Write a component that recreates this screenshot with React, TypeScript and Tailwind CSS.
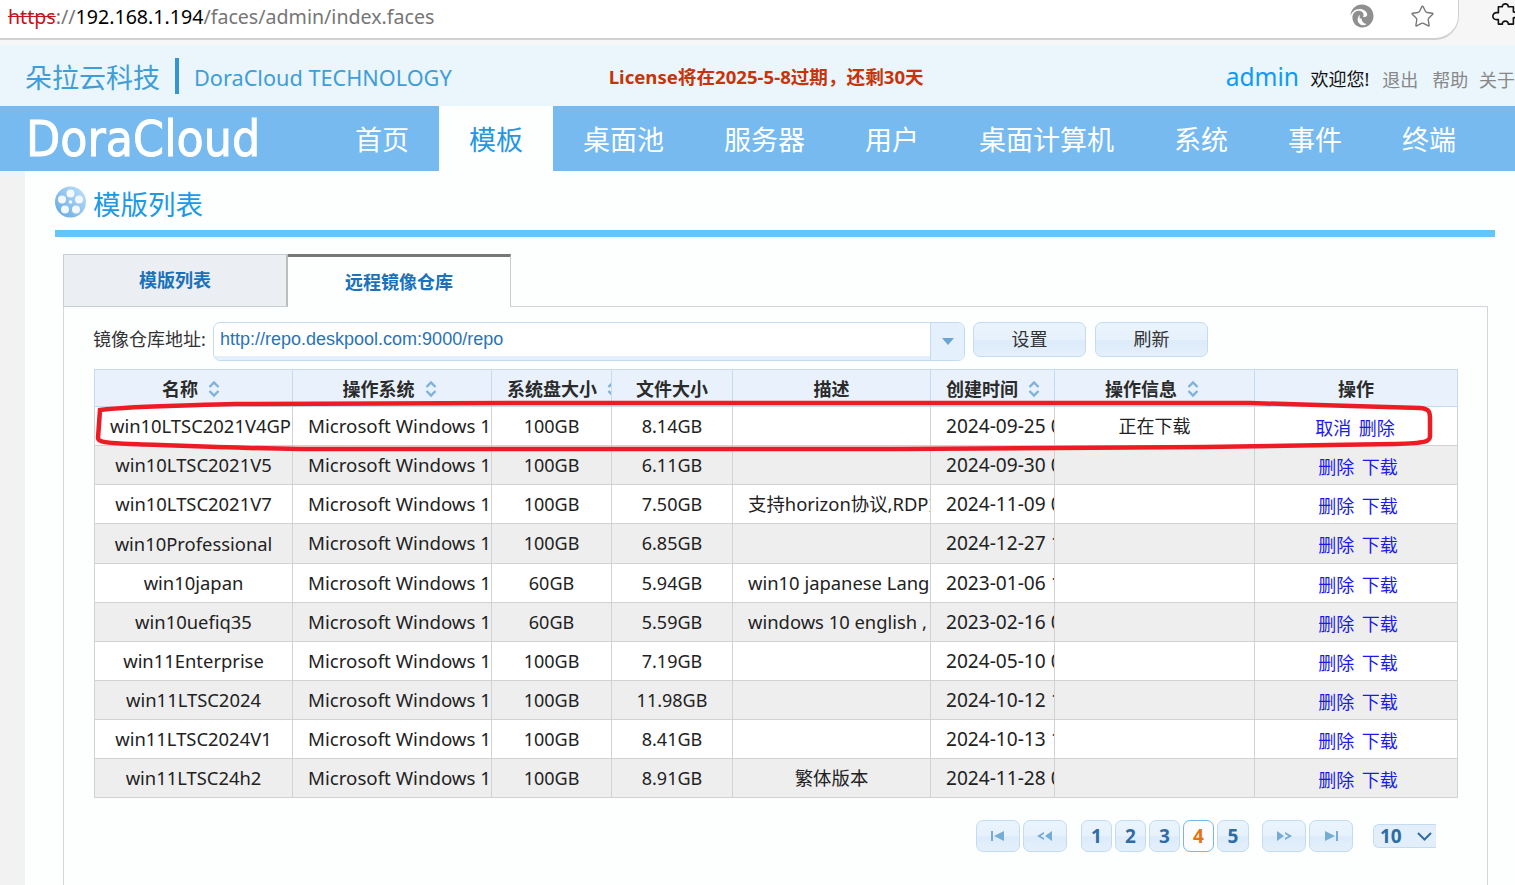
import { Star } from "lucide-react"

const font = { fontFamily: '"Noto Sans", "Noto Sans CJK SC", sans-serif' }

const navItems = ["首页", "模板", "桌面池", "服务器", "用户", "桌面计算机", "系统", "事件", "终端"]

const columns = [
  { label: "名称", sort: true },
  { label: "操作系统", sort: true },
  { label: "系统盘大小", sort: true },
  { label: "文件大小", sort: false },
  { label: "描述", sort: false },
  { label: "创建时间", sort: true },
  { label: "操作信息", sort: true },
  { label: "操作", sort: false },
]

const rows = [
  { name: "win10LTSC2021V4GPU", disk: "100GB", size: "8.14GB", desc: "", time: "2024-09-25 09:21:36", info: "正在下载", h: "h-[39px]" },
  { name: "win10LTSC2021V5", disk: "100GB", size: "6.11GB", desc: "", time: "2024-09-30 09:11:05", info: "", h: "h-[39px]" },
  { name: "win10LTSC2021V7", disk: "100GB", size: "7.50GB", desc: "支持horizon协议,RDP方式", time: "2024-11-09 08:40:17", info: "", h: "h-[39px]" },
  { name: "win10Professional", disk: "100GB", size: "6.85GB", desc: "", time: "2024-12-27 10:02:44", info: "", h: "h-[40px]" },
  { name: "win10japan", disk: "60GB", size: "5.94GB", desc: "win10 japanese Language", time: "2023-01-06 11:32:50", info: "", h: "h-[39px]" },
  { name: "win10uefiq35", disk: "60GB", size: "5.59GB", desc: "windows 10 english , uefi", time: "2023-02-16 09:15:28", info: "", h: "h-[39px]" },
  { name: "win11Enterprise", disk: "100GB", size: "7.19GB", desc: "", time: "2024-05-10 09:48:12", info: "", h: "h-[39px]" },
  { name: "win11LTSC2024", disk: "100GB", size: "11.98GB", desc: "", time: "2024-10-12 13:20:01", info: "", h: "h-[39px]" },
  { name: "win11LTSC2024V1", disk: "100GB", size: "8.41GB", desc: "", time: "2024-10-13 14:05:39", info: "", h: "h-[39px]" },
  { name: "win11LTSC24h2", disk: "100GB", size: "8.91GB", desc: "繁体版本", time: "2024-11-28 09:33:22", info: "", h: "h-[39px]" },
]

const SortIcon = () => (
  <svg width="12" height="18" viewBox="0 0 12 18" className="mr-[5px] ml-[10px] shrink-0" fill="none" stroke="#7fb2da" strokeWidth="2.4">
    <path d="M1.5 7 6 2.5 10.5 7" />
    <path d="M1.5 11 6 15.5 10.5 11" />
  </svg>
)

const ReelIcon = () => (
  <svg width="33" height="32" viewBox="0 0 33 32" className="-mt-[6px] -ml-[1px]">
    <defs>
      <linearGradient id="reel" x1="0" y1="1" x2="1" y2="0">
        <stop offset="0" stopColor="#5ea6e0" />
        <stop offset="1" stopColor="#c4e3fa" />
      </linearGradient>
    </defs>
    <circle cx="16.5" cy="16" r="15.5" fill="url(#reel)" />
    <circle cx="16.5" cy="7.5" r="4" fill="#f2f8fd" />
    <circle cx="8" cy="13.5" r="4" fill="#f2f8fd" />
    <circle cx="25" cy="13.5" r="4" fill="#f2f8fd" />
    <circle cx="11" cy="23.5" r="4" fill="#f2f8fd" />
    <circle cx="22" cy="23.5" r="4" fill="#f2f8fd" />
    <circle cx="16.5" cy="16" r="1.8" fill="#f2f8fd" />
  </svg>
)

const EdgeIcon = () => (
  <svg width="24" height="24" viewBox="0 0 24 24" fill="#8f8f8f">
    <path d="M12 0.5C5.6 0.5 0.6 5.4 0.5 12c1-4.2 5-7 9-7 4.2 0 7.7 2.6 7.7 5.6 0 1.4-1 2.4-2.6 2.4-1.2 0-1.6-.5-1.6-.5s.6-.7.6-1.7c0-2.2-2.2-4-5-4-3.6 0-6.2 3.2-6.2 6.8 0 5.2 4.2 9.9 9.6 9.9 6.2 0 11.5-4.8 11.500-11.500C23.500 5.600 18.500 0.500 12 0.500z" />
    <path d="M11.5 14.5c0 3 2.6 5.4 5.2 5.4-1.2 1-3 1.4-4.4 1.2-2.6-.4-5-3-4.6-6.4.2-1.6 1.2-3 2.4-3.6-.4 1-.6 2-.6 3.4z" fill="#fff" />
  </svg>
)

const PuzzleIcon = () => (
  <svg width="30" height="30" viewBox="0 0 26 26" fill="none" stroke="#111" strokeWidth="1.400" strokeLinejoin="round">
    <path d="M9 5h3.5c-.6-3.4 5.600-3.400 5 0H22v4.500c3.400-.6 3.400 5.600 0 5V20h-4.500c.6-3.400-5.600-3.400-5 0H9v-4c-3.800.8-4.800-1.500-4.800-2.800S5.200 9.400 9 10.200z" />
  </svg>
)

const PagerIcon = ({ d }: { d: string }) => (
  <svg width="16" height="10" viewBox="0 0 16 10" fill="#74acd6">
    <path d={d} />
  </svg>
)

const PagerButton = ({ d }: { d: string }) => (
  <div className="flex h-[32px] w-[44px] items-center justify-center rounded-[7px] border border-[#c3dcf1] bg-[linear-gradient(#eaf4fd_0%,#e6f1fc_50%,#dcebfa_52%,#e4f0fb_100%)]">
    <PagerIcon d={d} />
  </div>
)

const PageNumber = ({ n, active, wide }: { n: number; active?: boolean; wide?: boolean }) => (
  <div
    className={`${wide ? "w-[32px]" : "w-[31px]"} ${
      active
        ? "flex h-[32px] items-center justify-center rounded-[7px] border border-[#79b6e6] bg-[#fbfcfd] text-[19px] font-bold text-[#e6730f]"
        : "flex h-[32px] items-center justify-center rounded-[7px] border border-[#c3dcf1] bg-[linear-gradient(#eaf4fd_0%,#e6f1fc_50%,#dcebfa_52%,#e4f0fb_100%)] text-[19px] font-bold text-[#2e6da4]"
    }`}
  >
    {n}
  </div>
)

const ToolButton = ({ children }: { children: string }) => (
  <div className="flex h-[35px] w-[113px] items-center justify-center rounded-[7px] border border-[#c3dcf1] bg-[linear-gradient(#eaf4fd_0%,#e6f1fc_50%,#dcebfa_52%,#e4f0fb_100%)] text-[18px] text-[#333]">
    {children}
  </div>
)

const Cell = ({ children, left, size }: { children?: React.ReactNode; left?: boolean; size?: string }) => (
  <td className={`overflow-hidden whitespace-nowrap border border-[#d2d2d2] px-[15px] py-0 ${left ? "text-left" : "text-center"} ${size ?? ""}`}>
    {children}
  </td>
)

export default function App() {
  return (
    <div className="h-[885px] w-[1515px] overflow-hidden bg-[#fdfefe] text-[#222]" style={font}>
      {/* browser bar */}
      <div className="flex h-[45px] bg-[#f6f6f6]">
        <div className="flex h-[40px] w-[1459px] shrink-0 items-center justify-between rounded-br-[24px] border-r border-b-2 border-[#d0d0d0] bg-white pr-[23px] pl-[8px]">
          <div className="-mt-[5px] text-[19.600px] text-[#767676]">
            <span className="text-[#c4141c] line-through">https</span>://<span className="text-black">192.168.1.194</span>/faces/admin/index.faces
          </div>
          <div className="-mt-[6px] flex items-center gap-[36px]">
            <EdgeIcon />
            <Star size={25} strokeWidth={1.3} color="#777" />
          </div>
        </div>
        <div className="ml-[29px] mt-[1px] shrink-0">
          <PuzzleIcon />
        </div>
      </div>

      {/* header */}
      <div className="flex h-[61px] items-center bg-[#eaf5fc] pl-[25px] whitespace-nowrap">
        <span className="w-[135px] pt-[5px] text-[27px] text-[#3f9ed6]">朵拉云科技</span>
        <span className="mx-[15px] h-[36px] w-[4px] bg-[#3396d3]" />
        <span className="w-[416px] pt-[5px] text-[21.700px] text-[#3f9ed6]">DoraCloud TECHNOLOGY</span>
        <span className="w-[619px] pt-[2px] text-[18.600px] font-bold text-[#c8330a]">License将在2025-5-8过期，还剩30天</span>
        <span className="w-[85px] pt-[4px] text-[24.500px] text-[#0d9bf5]">admin</span>
        <span className="w-[72px] pt-[7px] text-[18px] text-[#111]">欢迎您!</span>
        <span className="w-[50px] pt-[9px] text-[18px] text-[#888]">退出</span>
        <span className="w-[47px] pt-[9px] text-[18px] text-[#888]">帮助</span>
        <span className="pt-[9px] text-[18px] text-[#888]">关于</span>
      </div>

      {/* nav */}
      <div className="flex h-[65px] bg-[#76baf0]">
        <div className="w-[325px] pt-[1px] pl-[26px]">
          <div
            className="origin-left scale-x-[0.89] text-[50px] leading-[65px] text-white blur-[0.4px] [-webkit-text-stroke:1px_white]"
            style={{ fontFamily: '"DejaVu Sans", sans-serif' }}
          >
            DoraCloud
          </div>
        </div>
        {navItems.map((item) => (
          <div
            key={item}
            className={`flex items-center px-[30px] pt-[3px] text-[27px] ${item === "模板" ? "bg-[#fdfefe] text-[#2596e4]" : "text-white"}`}
          >
            {item}
          </div>
        ))}
      </div>

      {/* content */}
      <div className="h-[714px] bg-[#f2f2f2] pl-[25px]">
        <div className="h-full bg-[#fdfefe] pl-[30px]">
          <div className="flex h-[59px] items-center gap-[6px] pt-[9px]">
            <ReelIcon />
            <span className="text-[27.500px] text-[#1b9ae6]">模版列表</span>
          </div>
          <div className="h-[7px] w-[1440px] bg-[#63c6fb]" />

          <div className="ml-[8px] mt-[17px] w-[1425px]">
            {/* tabs */}
            <div className="flex h-[53px]">
              <div className="flex w-[225px] items-center justify-center border border-r-2 border-[#c8cdd2] border-r-[#bdbdbd] bg-[#ebeff4] text-[18px] font-bold text-[#1a72bb]">
                模版列表
              </div>
              <div className="flex w-[223px] items-center justify-center border-t-[3px] border-r border-[#777] border-r-[#c8cdd2] bg-[#fdfefe] pt-[1px] text-[18px] font-bold text-[#1a72bb]">
                远程镜像仓库
              </div>
              <div className="flex-1 border-b border-[#d2d6da]" />
            </div>

            <div className="h-[600px] border-x border-[#d2d6da] pt-[15px] pl-[29px]">
              {/* repo row */}
              <div className="flex h-[40px] items-start">
                <span className="w-[120px] pt-[4px] text-[18px] whitespace-nowrap text-[#333]">镜像仓库地址:</span>
                <div className="flex h-[39px] w-[752px] overflow-hidden rounded-[7px] border border-[#c3dcf1] bg-white">
                  <div className="flex-1 border-b-[4px] border-[#e3effa] pl-[6px] text-[18px] leading-[32px] text-[#2a73b5]" style={{ fontFamily: '"Liberation Sans", sans-serif' }}>
                    http://repo.deskpool.com:9000/repo
                  </div>
                  <div className="flex w-[34px] items-center justify-center border-l border-[#c3dcf1] bg-[#e4f0fb]">
                    <svg width="12" height="7" viewBox="0 0 12 7" fill="#6ba5d3">
                      <path d="M0 0h12L6 7z" />
                    </svg>
                  </div>
                </div>
                <div className="ml-[8px] flex gap-[9px]">
                  <ToolButton>设置</ToolButton>
                  <ToolButton>刷新</ToolButton>
                </div>
              </div>

              {/* table */}
              <table className="mt-[7px] ml-[1px] w-[1363px] table-fixed border-collapse text-[18px]">
                <colgroup>
                  <col className="w-[198px]" />
                  <col className="w-[199px]" />
                  <col className="w-[120px]" />
                  <col className="w-[121px]" />
                  <col className="w-[198px]" />
                  <col className="w-[124px]" />
                  <col className="w-[200px]" />
                  <col className="w-[203px]" />
                </colgroup>
                <thead>
                  <tr className="h-[37px] bg-[#e9f2fc]">
                    {columns.map((c) => (
                      <th key={c.label} className="overflow-hidden border border-[#c5dbef] px-[15px] pt-[2px] pb-0 font-bold whitespace-nowrap text-[#2b2b2b]">
                        <span className="flex items-center justify-center-safe">
                          <span className="shrink-0">{c.label}</span>
                          {c.sort && <SortIcon />}
                        </span>
                      </th>
                    ))}
                  </tr>
                </thead>
                <tbody>
                  {rows.map((r, i) => (
                    <tr key={r.name} className={`${r.h} ${i % 2 === 1 ? "bg-[#eeeeee]" : "bg-white"}`}>
                      <Cell size="text-[18.400px]">{r.name}</Cell>
                      <Cell left size="text-[18.700px]">Microsoft Windows 10 Enterprise</Cell>
                      <Cell>{r.disk}</Cell>
                      <Cell>{r.size}</Cell>
                      <Cell size="text-[18.400px]">{r.desc}</Cell>
                      <Cell left size="text-[19.100px]">{r.time}</Cell>
                      <Cell>{r.info}</Cell>
                      <Cell>
                        <span className={`relative top-[2px] text-[#1a1aee] [word-spacing:3px] ${i === 0 ? "-left-[1px]" : "left-[2px]"}`}>
                          {i === 0 ? "取消 删除" : "删除 下载"}
                        </span>
                      </Cell>
                    </tr>
                  ))}
                </tbody>
              </table>

              {/* pager */}
              <div className="mt-[22px] flex w-[1343px] items-center justify-end">
                <div className="flex gap-[3px]">
                  <PagerButton d="M1 0h2v10H1zM14 0v10L4 5z" />
                  <PagerButton d="M0 5l7-4v2L3.500 5 7 7v2zM15 0v10L8 5z" />
                </div>
                <div className="ml-[14px] flex gap-[3px]">
                  <PageNumber n={1} />
                  <PageNumber n={2} />
                  <PageNumber n={3} />
                  <PageNumber n={4} active />
                  <PageNumber n={5} wide />
                </div>
                <div className="ml-[13px] flex gap-[3px]">
                  <PagerButton d="M1 0l7 5-7 5zM9 1l7 4-7 4V7l3.500-2L9 3z" />
                  <PagerButton d="M2 0l10 5-10 5zM13 0h2v10h-2z" />
                </div>
                <div className="ml-[20px] flex h-[24px] w-[63px] items-center justify-between rounded-l-[6px] border border-r-0 border-[#c3dcf1] bg-[#e2eefa] pr-[4px] pl-[6px] text-[19px] font-bold text-[#2e6da4]">
                  10
                  <svg width="15" height="9" viewBox="0 0 15 9" fill="none" stroke="#2e6da4" strokeWidth="2">
                    <path d="M1 1l6.500 6.500L14 1" />
                  </svg>
                </div>
              </div>
            </div>
          </div>
        </div>
      </div>

      {/* red annotation drawn over the first row */}
      <svg className="pointer-events-none absolute top-0 left-0" width="1515" height="885" fill="none" stroke="#ed1c24" strokeWidth="4.500">
        <path d="M100 410C130 406 170 406 235 404L520 403H1250C1300 405 1370 406 1420 408 1430 409 1430 412 1430 420L1430 436C1430 442 1425 443 1395 444 1330 445 1260 446 1205 447L900 449 300 449C220 448 170 445 130 444 105 443 98 442 98 438Z" />
      </svg>
    </div>
  )
}
